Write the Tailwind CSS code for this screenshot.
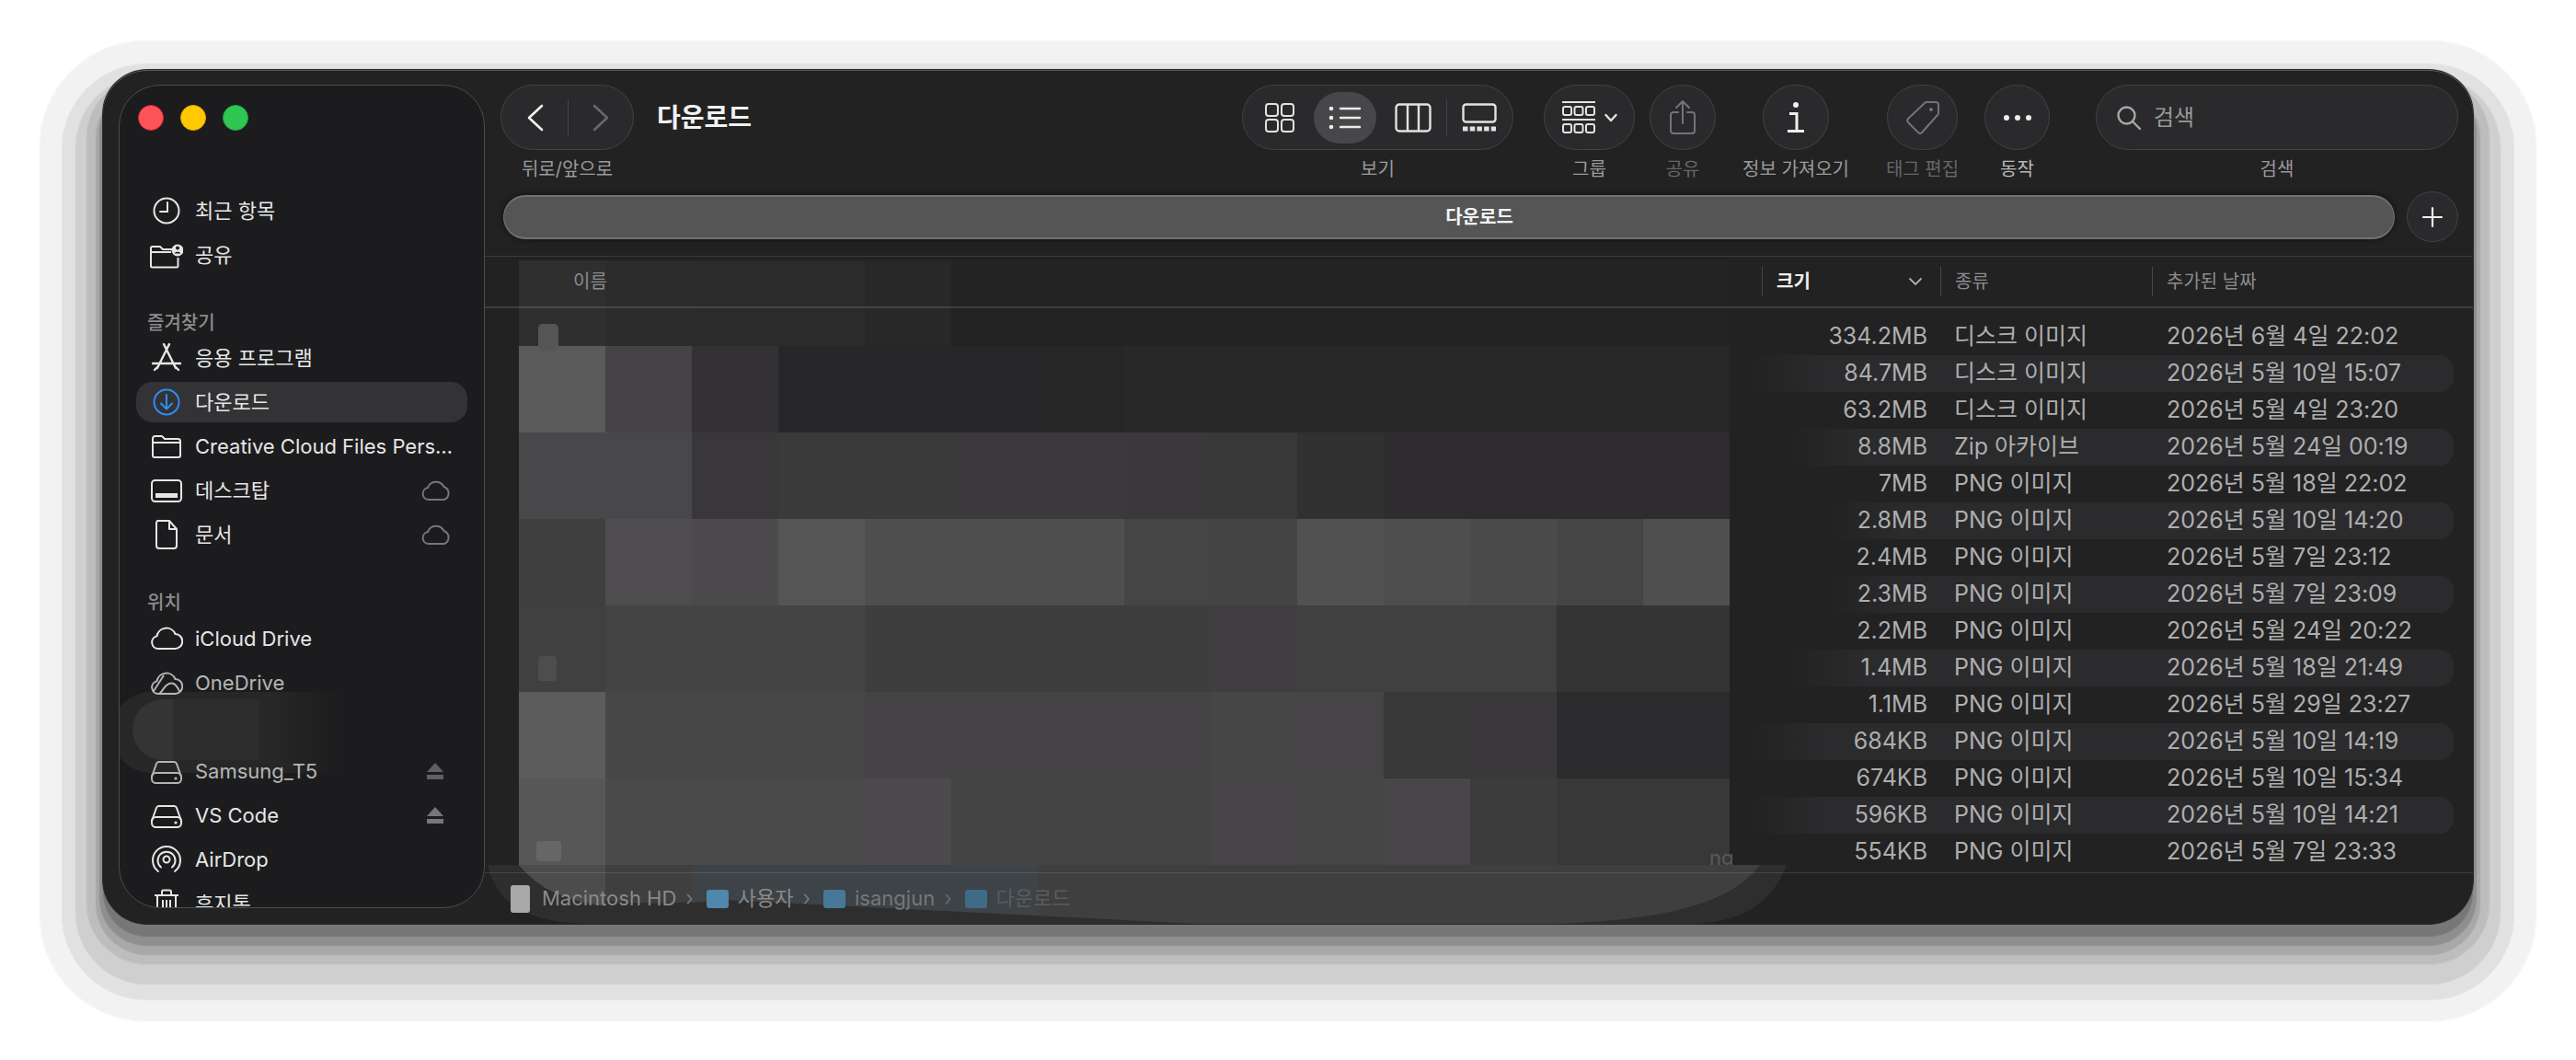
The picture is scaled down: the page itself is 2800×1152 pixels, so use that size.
<!DOCTYPE html>
<html lang="ko">
<head>
<meta charset="utf-8">
<title>다운로드</title>
<script src="https://cdn.jsdelivr.net/npm/@tailwindcss/browser@4"></script>
</head>
<body class="bg-white w-[2800px] h-[1152px] overflow-hidden font-[Inter,'Noto_Sans_CJK_KR',sans-serif]">
<div class="pt-[76px] pl-[112px]">
<div class="flex w-[2576px] h-[928px] rounded-[48px] bg-[#222223] shadow-[inset_0_1px_0_#5a5a5a,0_0_0_1px_#2a2a2a,0_14px_1px_0_#777777,0_20px_1px_4px_#8f8f8f,0_26px_1px_8px_#a8a8a8,0_26px_1px_18px_#bdbdbd,0_36px_1px_30px_#cfcfcf,0_38px_1px_45px_#e1e1e1,0_37px_2px_69px_#f2f2f2]">

<!-- SIDEBAR -->
<aside class="relative ml-[17px] mt-[16px] w-[398px] h-[895px] shrink-0 rounded-[45px] border border-[#4b4b4d] bg-[#1c1c1e] overflow-hidden text-[22px] text-[#e6e6e6]">
  <div class="absolute left-[20px] top-[21px] flex gap-[18px]">
    <span class="w-[28px] h-[28px] rounded-full bg-[#fe5458] border border-[#d8283a]"></span>
    <span class="w-[28px] h-[28px] rounded-full bg-[#ffc800] border border-[#e0a800]"></span>
    <span class="w-[28px] h-[28px] rounded-full bg-[#2fc654] border border-[#1fa83e]"></span>
  </div>
  <!-- blurred smear -->
  <div class="absolute left-[-9px] top-[659px] w-[250px] h-[88px] rounded-l-full bg-linear-to-r from-[#272727] from-[70%] to-[#1c1c1e]"></div>
  <div class="absolute left-[14px] top-[667px] w-[138px] h-[66px] rounded-l-full bg-[#2d2d2d]"></div>
  <div class="absolute left-[14px] top-[667px] w-[44px] h-[66px] rounded-l-full bg-[#343434]"></div>

  <div class="relative pt-[112px]">
    <div class="flex items-center h-[48px] mx-[18px] pl-[15px]">
      <svg class="w-[36px] h-[36px]" viewBox="0 0 36 36" fill="none" stroke="#e6e6e6" stroke-width="2"><circle cx="18" cy="18" r="13.5"/><path d="M19 9v10h-8" stroke-linecap="round"/></svg>
      <span class="ml-[13px]">최근 항목</span>
    </div>
    <div class="flex items-center h-[48px] mx-[18px] pl-[15px]">
      <svg class="w-[36px] h-[36px]" viewBox="0 0 36 36" fill="none" stroke="#e6e6e6" stroke-width="2"><path d="M25 12H14l-3-3H2.5a1.5 1.5 0 0 0-1.500 1.500V30a1.500 1.500 0 0 0 1.500 1.500H29a1.500 1.500 0 0 0 1.500-1.500V21"/><path d="M1 15h22"/><circle cx="30" cy="13" r="6.500" fill="#e6e6e6" stroke="none"/><circle cx="30" cy="10.500" r="2" fill="#1c1c1e" stroke="none"/><path d="M26.500 16.500c1-2.500 6-2.500 7 0z" fill="#1c1c1e" stroke="none"/></svg>
      <span class="ml-[13px]">공유</span>
    </div>
    <div class="flex items-center h-[29px] mt-[35px] pl-[30px] text-[20px] text-[#8c8c8c] font-medium">즐겨찾기</div>
    <div class="flex items-center h-[48px] mx-[18px] pl-[15px]">
      <svg class="w-[36px] h-[36px]" viewBox="0 0 36 36" fill="none" stroke="#e6e6e6" stroke-width="2.400" stroke-linecap="round"><path d="M15 3l13 26M21 3L8 29M3 24h30M5 31l3-3M31 31l-3-3"/></svg>
      <span class="ml-[13px]">응용 프로그램</span>
    </div>
    <div class="h-[48px] mx-[18px] py-[2px]">
      <div class="flex items-center h-[44px] pl-[15px] rounded-[18px] bg-[#333335]">
        <svg class="w-[36px] h-[36px]" viewBox="0 0 36 36" fill="none" stroke="#2f8df5" stroke-width="2" stroke-linecap="round" stroke-linejoin="round"><circle cx="18" cy="18" r="13.500"/><path d="M18 10v15M12 19.500l6 6 6-6"/></svg>
        <span class="ml-[13px] text-[#e6e6e6]">다운로드</span>
      </div>
    </div>
    <div class="flex items-center h-[48px] mx-[18px] pl-[15px]">
      <svg class="w-[36px] h-[36px]" viewBox="0 0 36 36" fill="none" stroke="#e6e6e6" stroke-width="2"><path d="M3 9.500A2.500 2.500 0 0 1 5.500 7H13l3 3h14.500A2.500 2.500 0 0 1 33 12.500V28a2 2 0 0 1-2 2H5a2 2 0 0 1-2-2z"/><path d="M3 14h30"/></svg>
      <span class="ml-[13px] w-[282px] truncate">Creative Cloud Files Personal</span>
    </div>
    <div class="flex items-center h-[48px] mx-[18px] pl-[15px]">
      <svg class="w-[36px] h-[36px]" viewBox="0 0 36 36" fill="none" stroke="#e6e6e6" stroke-width="2"><rect x="2" y="7" width="32" height="23" rx="3.500"/><rect x="6" y="21" width="24" height="5" fill="#e6e6e6" stroke="none"/></svg>
      <span class="ml-[13px]">데스크탑</span>
      <svg class="ml-auto mr-[17px] w-[34px] h-[24px]" viewBox="0 0 34 24" fill="none" stroke="#77777a" stroke-width="2"><path d="M9 22a6.500 6.500 0 0 1-1-12.900A9.500 9.500 0 0 1 25.500 8 7.500 7.500 0 0 1 26 22z"/></svg>
    </div>
    <div class="flex items-center h-[48px] mx-[18px] pl-[15px]">
      <svg class="w-[36px] h-[36px]" viewBox="0 0 36 36" fill="none" stroke="#e6e6e6" stroke-width="2" stroke-linejoin="round"><path d="M8 3h13l8 9v18a3 3 0 0 1-3 3H10a3 3 0 0 1-3-3V5z"/><path d="M21 3v9h8"/></svg>
      <span class="ml-[13px]">문서</span>
      <svg class="ml-auto mr-[17px] w-[34px] h-[24px]" viewBox="0 0 34 24" fill="none" stroke="#77777a" stroke-width="2"><path d="M9 22a6.500 6.500 0 0 1-1-12.900A9.500 9.500 0 0 1 25.500 8 7.500 7.500 0 0 1 26 22z"/></svg>
    </div>
    <div class="flex items-center h-[31px] mt-[34px] pl-[30px] text-[20px] text-[#8c8c8c] font-medium">위치</div>
    <div class="flex items-center h-[48px] mx-[18px] pl-[15px]">
      <svg class="w-[36px] h-[36px]" viewBox="0 0 36 36" fill="none" stroke="#e6e6e6" stroke-width="2"><path d="M9 29a7 7 0 0 1-1.500-13.800A10.500 10.500 0 0 1 27.500 13 8 8 0 0 1 27 29z"/></svg>
      <span class="ml-[13px]">iCloud Drive</span>
    </div>
    <div class="flex items-center h-[48px] mx-[18px] pl-[15px] opacity-75">
      <svg class="w-[36px] h-[36px]" viewBox="0 0 36 36" fill="none" stroke="#e6e6e6" stroke-width="2"><path d="M9 30a7 7 0 0 1-1.500-13.800A10.500 10.500 0 0 1 27.500 14 8 8 0 0 1 27 30zM4 27L15 10M10 30c3-1 5-9 11-11s9 4 11 8"/></svg>
      <span class="ml-[13px]">OneDrive</span>
    </div>
    <div class="h-[48px]"></div>
    <div class="flex items-center h-[48px] mx-[18px] pl-[15px] opacity-75">
      <svg class="w-[36px] h-[36px]" viewBox="0 0 36 36" fill="none" stroke="#e6e6e6" stroke-width="2"><path d="M2 24l5-14a3 3 0 0 1 3-2h16a3 3 0 0 1 3 2l5 14"/><rect x="2" y="20" width="32" height="11" rx="4.500"/><circle cx="28" cy="26" r="1.600" fill="#e6e6e6" stroke="none"/></svg>
      <span class="ml-[13px]">Samsung_T5</span>
      <svg class="ml-auto mr-[25px] w-[20px] h-[20px]" viewBox="0 0 20 20" fill="#77777a"><path d="M10 1l9 10H1z"/><rect x="1" y="14" width="18" height="5"/></svg>
    </div>
    <div class="flex items-center h-[48px] mx-[18px] pl-[15px]">
      <svg class="w-[36px] h-[36px]" viewBox="0 0 36 36" fill="none" stroke="#e6e6e6" stroke-width="2"><path d="M2 24l5-14a3 3 0 0 1 3-2h16a3 3 0 0 1 3 2l5 14"/><rect x="2" y="20" width="32" height="11" rx="4.500"/><circle cx="28" cy="26" r="1.600" fill="#e6e6e6" stroke="none"/></svg>
      <span class="ml-[13px]">VS Code</span>
      <svg class="ml-auto mr-[25px] w-[20px] h-[20px]" viewBox="0 0 20 20" fill="#77777a"><path d="M10 1l9 10H1z"/><rect x="1" y="14" width="18" height="5"/></svg>
    </div>
    <div class="flex items-center h-[48px] mx-[18px] pl-[15px]">
      <svg class="w-[36px] h-[36px]" viewBox="0 0 36 36" fill="none" stroke="#e6e6e6" stroke-width="2" stroke-linecap="round"><path d="M9 31A15 15 0 1 1 27 31M12 26.500A9.500 9.500 0 1 1 24 26.500"/><circle cx="18" cy="18" r="3.500"/></svg>
      <span class="ml-[13px]">AirDrop</span>
    </div>
    <div class="flex items-center h-[48px] mx-[18px] pl-[15px]">
      <svg class="w-[36px] h-[36px]" viewBox="0 0 36 36" fill="none" stroke="#e6e6e6" stroke-width="2"><path d="M5 9h26M13 9V5a1.500 1.500 0 0 1 1.500-1.500h7A1.500 1.500 0 0 1 23 5v4M8 9v22a3 3 0 0 0 3 3h14a3 3 0 0 0 3-3V9M14 14v15M18 14v15M22 14v15"/></svg>
      <span class="ml-[13px]">휴지통</span>
    </div>
  </div>
</aside>

<!-- MAIN -->
<main class="relative flex flex-col flex-1 min-w-0">
  <!-- redaction mosaic over the file names -->
  <div class="absolute left-[37px] top-[207px] grid grid-cols-[repeat(14,94px)] grid-rows-[93px_repeat(6,94px)]">
    <div class="bg-[#2f2f2f]"></div><div class="bg-[#2c2c2c]"></div><div class="bg-[#2b2b2b]"></div><div class="bg-[#2b2b2b]"></div><div class="bg-[#282828]"></div><div class="bg-[#232323]"></div><div class="bg-[#232323]"></div><div class="bg-[#232323]"></div><div class="bg-[#232323]"></div><div class="bg-[#232323]"></div><div class="bg-[#232323]"></div><div class="bg-[#232323]"></div><div class="bg-[#232323]"></div><div class="bg-[#232323]"></div>
    <div class="bg-[#5a5a5a]"></div><div class="bg-[#454345]"></div><div class="bg-[#333133]"></div><div class="bg-[#272628]"></div><div class="bg-[#272628]"></div><div class="bg-[#262527]"></div><div class="bg-[#262626]"></div><div class="bg-[#282828]"></div><div class="bg-[#282828]"></div><div class="bg-[#282828]"></div><div class="bg-[#282828]"></div><div class="bg-[#282828]"></div><div class="bg-[#282828]"></div><div class="bg-[#282828]"></div>
    <div class="bg-[#484749]"></div><div class="bg-[#484749]"></div><div class="bg-[#39373a]"></div><div class="bg-[#3a3a3a]"></div><div class="bg-[#3a3a3a]"></div><div class="bg-[#3b393b]"></div><div class="bg-[#3b393b]"></div><div class="bg-[#3a383a]"></div><div class="bg-[#383838]"></div><div class="bg-[#313131]"></div><div class="bg-[#2e2c2e]"></div><div class="bg-[#2e2c2e]"></div><div class="bg-[#2e2c2e]"></div><div class="bg-[#2e2c2e]"></div>
    <div class="bg-[#3f3f3f]"></div><div class="bg-[#4e4c4e]"></div><div class="bg-[#4c4a4c]"></div><div class="bg-[#555555]"></div><div class="bg-[#4e4e4e]"></div><div class="bg-[#4e4e4e]"></div><div class="bg-[#4e4e4e]"></div><div class="bg-[#454545]"></div><div class="bg-[#444444]"></div><div class="bg-[#515151]"></div><div class="bg-[#4e4e4e]"></div><div class="bg-[#4b4b4b]"></div><div class="bg-[#454545]"></div><div class="bg-[#4f4f4f]"></div>
    <div class="bg-[#404040]"></div><div class="bg-[#444444]"></div><div class="bg-[#444444]"></div><div class="bg-[#444444]"></div><div class="bg-[#3e3e3e]"></div><div class="bg-[#3e3e3e]"></div><div class="bg-[#3e3e3e]"></div><div class="bg-[#3e3e3e]"></div><div class="bg-[#403e40]"></div><div class="bg-[#404040]"></div><div class="bg-[#404040]"></div><div class="bg-[#404040]"></div><div class="bg-[#343434]"></div><div class="bg-[#343434]"></div>
    <div class="bg-[#5c5c5c]"></div><div class="bg-[#474747]"></div><div class="bg-[#474747]"></div><div class="bg-[#474747]"></div><div class="bg-[#454345]"></div><div class="bg-[#454345]"></div><div class="bg-[#454345]"></div><div class="bg-[#454345]"></div><div class="bg-[#464646]"></div><div class="bg-[#464446]"></div><div class="bg-[#383838]"></div><div class="bg-[#3a383a]"></div><div class="bg-[#2b2a2c]"></div><div class="bg-[#2b2a2c]"></div>
    <div class="bg-[#575757]"></div><div class="bg-[#4a4a4a]"></div><div class="bg-[#4a4a4a]"></div><div class="bg-[#4a4a4a]"></div><div class="bg-[#4c4a4c]"></div><div class="bg-[#444444]"></div><div class="bg-[#444444]"></div><div class="bg-[#444444]"></div><div class="bg-[#474547]"></div><div class="bg-[#454545]"></div><div class="bg-[#484648]"></div><div class="bg-[#3c3c3c]"></div><div class="bg-[#383838]"></div><div class="bg-[#383838]"></div>
  </div>
  <!-- faint file icons in the mosaic -->
  <div class="absolute left-[58px] top-[276px] w-[22px] h-[29px] rounded-[5px] bg-[#555555]"></div>
  <div class="absolute left-[58px] top-[637px] w-[20px] h-[27px] rounded-[4px] bg-[#4d4d4d]"></div>
  <div class="absolute left-[56px] top-[838px] w-[27px] h-[22px] rounded-[4px] bg-[#666666]"></div>
  <div class="absolute left-[1331px] top-[840px] text-[22px] text-[#5a5a5a]">ng</div>
  <!-- smear over the path bar -->
  <svg class="absolute left-[3px] top-[864px] w-[1430px] h-[64px]" viewBox="530 940 1430 64">
    <path d="M530 940H1942C1925 985 1890 1002 1840 1004H640C580 1004 540 985 530 940Z" fill="#2e2e2e"/>
    <path d="M564 940H1913C1880 985 1800 1000 1690 1004H1300L790 978C700 985 600 985 564 940Z" fill="#3f3f3f"/>
    <path d="M564 940H658V985C610 978 585 965 564 940Z" fill="#4c4c4c"/>
    <path d="M752 940H1129V995L790 978L752 981Z" fill="#3d4347"/>
  </svg>

  <!-- toolbar -->
  <div class="relative flex items-start pt-[16px] pl-[17px] pr-[16px] text-[20px] text-[#9a9a9a]">
    <div class="flex flex-col items-center w-[145px]">
      <div class="flex items-center w-full h-[71px] rounded-full bg-[#2a2a2c] border border-[#424244]">
        <svg class="ml-[28px] w-[18px] h-[30px]" viewBox="0 0 18 30" fill="none" stroke="#f0f0f0" stroke-width="2.600" stroke-linecap="round" stroke-linejoin="round"><path d="M16 2L2 15l14 13"/></svg>
        <span class="ml-[26px] w-[1px] h-[40px] bg-[#444446]"></span>
        <svg class="ml-[26px] w-[18px] h-[30px]" viewBox="0 0 18 30" fill="none" stroke="#68686a" stroke-width="2.600" stroke-linecap="round" stroke-linejoin="round"><path d="M2 2l14 13L2 28"/></svg>
      </div>
      <div class="flex items-center h-[42px] mb-[3px] whitespace-nowrap">뒤로/앞으로</div>
    </div>
    <div class="flex-1 pl-[25px] h-[71px] flex items-center text-[28px] font-semibold text-[#f2f2f2]">다운로드</div>
    <div class="flex flex-col items-center w-[295px]">
      <div class="flex items-center w-full h-[71px] rounded-full bg-[#2a2a2c] border border-[#424244]">
        <svg class="ml-[24px] w-[32px] h-[32px]" viewBox="0 0 32 32" fill="none" stroke="#e2e2e2" stroke-width="2"><rect x="1" y="1" width="13" height="13" rx="3"/><rect x="18" y="1" width="13" height="13" rx="3"/><rect x="1" y="18" width="13" height="13" rx="3"/><rect x="18" y="18" width="13" height="13" rx="3"/></svg>
        <div class="ml-[21px] flex items-center justify-center w-[68px] h-[56px] rounded-full bg-[#47474a]">
          <svg class="w-[36px] h-[30px]" viewBox="0 0 36 30" fill="none" stroke="#ececec" stroke-width="2.400" stroke-linecap="round"><path d="M13 5h21M13 15h21M13 25h21"/><circle cx="3" cy="5" r="2.300" fill="#ececec" stroke="none"/><circle cx="3" cy="15" r="2.300" fill="#ececec" stroke="none"/><circle cx="3" cy="25" r="2.300" fill="#ececec" stroke="none"/></svg>
        </div>
        <svg class="ml-[20px] w-[40px] h-[32px]" viewBox="0 0 40 32" fill="none" stroke="#e2e2e2" stroke-width="2.400"><rect x="1.500" y="1.500" width="37" height="29" rx="3.500"/><path d="M14 2v28M26 2v28"/></svg>
        <span class="ml-[16px] w-[1px] h-[40px] bg-[#444446]"></span>
        <svg class="ml-[16px] w-[38px] h-[32px]" viewBox="0 0 38 32" fill="none" stroke="#e2e2e2" stroke-width="2.400"><rect x="1.500" y="1.500" width="35" height="19" rx="3"/><path d="M1 28h36" stroke-width="5" stroke-dasharray="5.500 2.200"/></svg>
      </div>
      <div class="flex items-center h-[42px] whitespace-nowrap">보기</div>
    </div>
    <div class="flex flex-col items-center w-[99px] ml-[33px]">
      <div class="flex items-center w-full h-[71px] rounded-full bg-[#2a2a2c] border border-[#424244]">
        <svg class="ml-[19px] w-[36px] h-[38px]" viewBox="0 0 36 38" fill="none" stroke="#e2e2e2"><path d="M0 2h36M0 21h36" stroke-width="2"/><rect x="1" y="7" width="9" height="9" rx="2" stroke-width="2"/><rect x="13.500" y="7" width="9" height="9" rx="2" stroke-width="2"/><rect x="26" y="7" width="9" height="9" rx="2" stroke-width="2"/><rect x="1" y="26" width="9" height="9" rx="2" stroke-width="2"/><rect x="13.500" y="26" width="9" height="9" rx="2" stroke-width="2"/><rect x="26" y="26" width="9" height="9" rx="2" stroke-width="2"/></svg>
        <svg class="ml-[10px] w-[14px] h-[10px]" viewBox="0 0 14 10" fill="none" stroke="#e2e2e2" stroke-width="2.400" stroke-linecap="round" stroke-linejoin="round"><path d="M1.500 2L7 8l5.500-6"/></svg>
      </div>
      <div class="flex items-center h-[42px] whitespace-nowrap">그룹</div>
    </div>
    <div class="flex flex-col items-center w-[72px] ml-[16px]">
      <div class="flex items-center justify-center w-full h-[71px] rounded-full bg-[#2a2a2c] border border-[#424244]">
        <svg class="w-[30px] h-[40px]" viewBox="0 0 30 40" fill="none" stroke="#747476" stroke-width="2" stroke-linecap="round" stroke-linejoin="round"><path d="M15 2v24M8 9l7-7 7 7M10 14H5a3 3 0 0 0-3 3v17a3 3 0 0 0 3 3h20a3 3 0 0 0 3-3V17a3 3 0 0 0-3-3h-5"/></svg>
      </div>
      <div class="flex items-center h-[42px] whitespace-nowrap text-[#666668]">공유</div>
    </div>
    <div class="flex flex-col items-center w-[72px] ml-[51px]">
      <div class="flex items-center justify-center w-full h-[71px] rounded-full bg-[#2a2a2c] border border-[#424244]">
        <svg class="w-[20px] h-[34px]" viewBox="0 0 20 34" fill="none" stroke="#efefef" stroke-width="3"><circle cx="10" cy="3" r="3" fill="#efefef" stroke="none"/><path d="M3 12.500h8v19M1 31.500h18"/></svg>
      </div>
      <div class="flex items-center h-[42px] whitespace-nowrap">정보 가져오기</div>
    </div>
    <div class="flex flex-col items-center w-[77px] ml-[63px]">
      <div class="flex items-center justify-center w-full h-[71px] rounded-full bg-[#2a2a2c] border border-[#424244]">
        <svg class="w-[38px] h-[38px]" viewBox="0 0 38 38" fill="none" stroke="#747476" stroke-width="2" stroke-linejoin="round"><path d="M24 2h9a3 3 0 0 1 3 3v9a3 3 0 0 1-1 2L18 35a3 3 0 0 1-4 0L3 24a3 3 0 0 1 0-4L21 3a3 3 0 0 1 3-1z"/><circle cx="28" cy="10" r="2" fill="#747476" stroke="none"/></svg>
      </div>
      <div class="flex items-center h-[42px] whitespace-nowrap text-[#666668]">태그 편집</div>
    </div>
    <div class="flex flex-col items-center w-[71px] ml-[29px]">
      <div class="flex items-center justify-center gap-[6px] w-full h-[71px] rounded-full bg-[#2a2a2c] border border-[#424244]">
        <span class="w-[6px] h-[6px] rounded-full bg-[#efefef]"></span><span class="w-[6px] h-[6px] rounded-full bg-[#efefef]"></span><span class="w-[6px] h-[6px] rounded-full bg-[#efefef]"></span>
      </div>
      <div class="flex items-center h-[42px] whitespace-nowrap text-[#b8b8b8]">동작</div>
    </div>
    <div class="flex flex-col items-center w-[394px] ml-[50px]">
      <div class="flex items-center w-full h-[71px] rounded-full bg-[#2a2a2c] border border-[#424244]">
        <svg class="ml-[21px] w-[28px] h-[28px]" viewBox="0 0 28 28" fill="none" stroke="#a8a8a8" stroke-width="2.400" stroke-linecap="round"><circle cx="11.500" cy="11.500" r="9"/><path d="M18 18l8 8"/></svg>
        <span class="ml-[13px] text-[24px] text-[#999999]">검색</span>
      </div>
      <div class="flex items-center h-[42px] whitespace-nowrap">검색</div>
    </div>
  </div>

  <!-- tab bar -->
  <div class="relative flex items-center pl-[20px] pr-[16px] pb-[15px]">
    <div class="flex-1 flex items-center justify-center h-[48px] pl-[66px] rounded-full bg-[#555556] border-t-2 border-b-2 border-l border-r border-[#727274] shadow-[0_0_6px_#111111] text-[20px] font-semibold text-[#f4f4f4]">다운로드</div>
    <div class="ml-[13px] flex items-center justify-center w-[56px] h-[55px] rounded-full bg-[#2a2a2c] border border-[#424244]">
      <svg class="w-[24px] h-[24px]" viewBox="0 0 24 24" fill="none" stroke="#f0f0f0" stroke-width="2.200" stroke-linecap="round"><path d="M12 2v20M2 12h20"/></svg>
    </div>
  </div>

  <!-- column header -->
  <div class="relative flex items-center h-[57px] border-t border-b-2 border-[#ffffff1f] text-[20px] text-[#8c8c8c]">
    <div class="w-[1388px] pl-[96px]">이름</div>
    <div class="flex items-center w-[194px] h-[32px] pl-[15px] border-l border-[#48484a] font-bold text-[#f0f0f0]">크기
      <svg class="ml-auto mr-[19px] w-[16px] h-[10px]" viewBox="0 0 16 10" fill="none" stroke="#b0b0b0" stroke-width="1.800" stroke-linecap="round"><path d="M2 2l6 6 6-6"/></svg>
    </div>
    <div class="flex items-center w-[230px] h-[32px] pl-[15px] border-l border-[#48484a]">종류</div>
    <div class="flex items-center flex-1 h-[32px] pl-[15px] border-l border-[#48484a]">추가된 날짜</div>
  </div>

  <!-- rows -->
  <div class="relative flex-1 min-h-0 pt-[11px] overflow-hidden text-[25px] text-[#aeaeae] whitespace-nowrap">
    <div class="flex items-center h-[40px] ml-[12px] w-[2128px] rounded-[16px]"><span class="w-[1556px] text-right">334.2MB</span><span class="ml-[29px] w-[231px]">디스크 이미지</span><span>2026년 6월 4일 22:02</span></div>
    <div class="flex items-center h-[40px] ml-[12px] w-[2128px] rounded-[16px] bg-linear-to-r from-transparent from-[64%] to-[#2b2b2d] to-[68%]"><span class="w-[1556px] text-right">84.7MB</span><span class="ml-[29px] w-[231px]">디스크 이미지</span><span>2026년 5월 10일 15:07</span></div>
    <div class="flex items-center h-[40px] ml-[12px] w-[2128px] rounded-[16px]"><span class="w-[1556px] text-right">63.2MB</span><span class="ml-[29px] w-[231px]">디스크 이미지</span><span>2026년 5월 4일 23:20</span></div>
    <div class="flex items-center h-[40px] ml-[12px] w-[2128px] rounded-[16px] bg-linear-to-r from-transparent from-[66%] to-[#2b2b2d] to-[70%]"><span class="w-[1556px] text-right">8.8MB</span><span class="ml-[29px] w-[231px]">Zip 아카이브</span><span>2026년 5월 24일 00:19</span></div>
    <div class="flex items-center h-[40px] ml-[12px] w-[2128px] rounded-[16px]"><span class="w-[1556px] text-right">7MB</span><span class="ml-[29px] w-[231px]">PNG 이미지</span><span>2026년 5월 18일 22:02</span></div>
    <div class="flex items-center h-[40px] ml-[12px] w-[2128px] rounded-[16px] bg-linear-to-r from-transparent from-[68%] to-[#2b2b2d] to-[72%]"><span class="w-[1556px] text-right">2.8MB</span><span class="ml-[29px] w-[231px]">PNG 이미지</span><span>2026년 5월 10일 14:20</span></div>
    <div class="flex items-center h-[40px] ml-[12px] w-[2128px] rounded-[16px]"><span class="w-[1556px] text-right">2.4MB</span><span class="ml-[29px] w-[231px]">PNG 이미지</span><span>2026년 5월 7일 23:12</span></div>
    <div class="flex items-center h-[40px] ml-[12px] w-[2128px] rounded-[16px] bg-linear-to-r from-transparent from-[68%] to-[#2b2b2d] to-[72%]"><span class="w-[1556px] text-right">2.3MB</span><span class="ml-[29px] w-[231px]">PNG 이미지</span><span>2026년 5월 7일 23:09</span></div>
    <div class="flex items-center h-[40px] ml-[12px] w-[2128px] rounded-[16px]"><span class="w-[1556px] text-right">2.2MB</span><span class="ml-[29px] w-[231px]">PNG 이미지</span><span>2026년 5월 24일 20:22</span></div>
    <div class="flex items-center h-[40px] ml-[12px] w-[2128px] rounded-[16px] bg-linear-to-r from-transparent from-[66%] to-[#2b2b2d] to-[70%]"><span class="w-[1556px] text-right">1.4MB</span><span class="ml-[29px] w-[231px]">PNG 이미지</span><span>2026년 5월 18일 21:49</span></div>
    <div class="flex items-center h-[40px] ml-[12px] w-[2128px] rounded-[16px]"><span class="w-[1556px] text-right">1.1MB</span><span class="ml-[29px] w-[231px]">PNG 이미지</span><span>2026년 5월 29일 23:27</span></div>
    <div class="flex items-center h-[40px] ml-[12px] w-[2128px] rounded-[16px] bg-linear-to-r from-transparent from-[64%] to-[#2b2b2d] to-[68%]"><span class="w-[1556px] text-right">684KB</span><span class="ml-[29px] w-[231px]">PNG 이미지</span><span>2026년 5월 10일 14:19</span></div>
    <div class="flex items-center h-[40px] ml-[12px] w-[2128px] rounded-[16px]"><span class="w-[1556px] text-right">674KB</span><span class="ml-[29px] w-[231px]">PNG 이미지</span><span>2026년 5월 10일 15:34</span></div>
    <div class="flex items-center h-[40px] ml-[12px] w-[2128px] rounded-[16px] bg-linear-to-r from-transparent from-[64%] to-[#2b2b2d] to-[68%]"><span class="w-[1556px] text-right">596KB</span><span class="ml-[29px] w-[231px]">PNG 이미지</span><span>2026년 5월 10일 14:21</span></div>
    <div class="flex items-center h-[40px] ml-[12px] w-[2128px] rounded-[16px]"><span class="w-[1556px] text-right">554KB</span><span class="ml-[29px] w-[231px]">PNG 이미지</span><span>2026년 5월 7일 23:33</span></div>
  </div>

  <!-- path bar -->
  <div class="relative flex items-center h-[56px] shrink-0 pl-[28px] border-t border-[#ffffff1f] text-[22px] text-[#8a8a8a] whitespace-nowrap">
    <span class="w-[21px] h-[30px] rounded-[3px] bg-[#a8a8a8]"></span>
    <span class="ml-[13px]">Macintosh HD</span><span class="ml-[10px] text-[#777777]">›</span>
    <span class="ml-[14px] w-[24px] h-[20px] rounded-[3px] bg-[#4f87ad]"></span>
    <span class="ml-[10px]">사용자</span><span class="ml-[10px] text-[#777777]">›</span>
    <span class="ml-[14px] w-[24px] h-[20px] rounded-[3px] bg-[#47789a]"></span>
    <span class="ml-[10px] text-[#777777]">isangjun</span><span class="ml-[10px] text-[#666666]">›</span>
    <span class="ml-[14px] w-[24px] h-[20px] rounded-[3px] bg-[#3f6a88]"></span>
    <span class="ml-[10px] text-[#5c5c5c]">다운로드</span>
  </div>
</main>
</div>
</div>
</body>
</html>
